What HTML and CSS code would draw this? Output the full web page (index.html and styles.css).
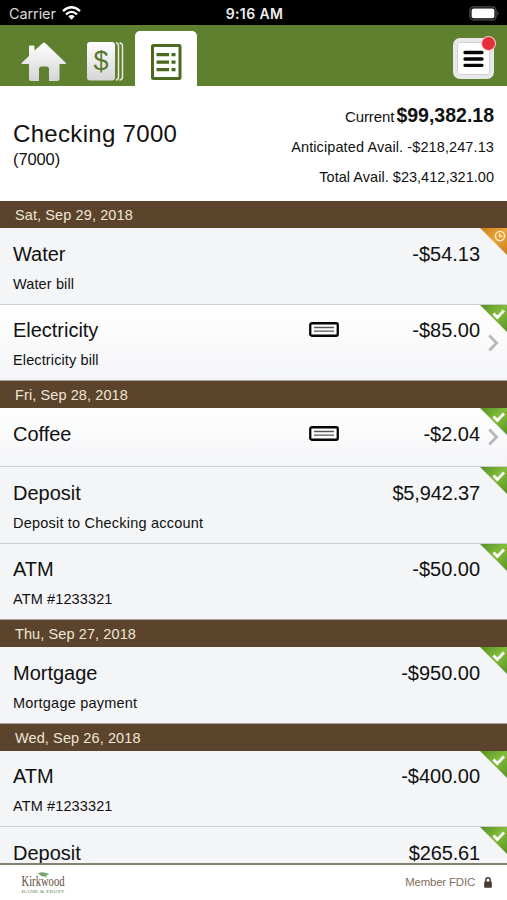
FILE: index.html
```html
<!DOCTYPE html>
<html lang="en">
<head>
<meta charset="utf-8">
<title>Checking 7000</title>
<link rel="stylesheet" href="styles.css">
</head>
<body>
<svg class="defs" aria-hidden="true">
  <defs>
    <linearGradient id="silver" x1="0" y1="0" x2="0" y2="1"><stop offset="0" stop-color="#fff"/><stop offset="1" stop-color="#d5d5d8"/></linearGradient>
    <linearGradient id="leaf" x1="0" y1="0" x2="1" y2="1"><stop offset="0" stop-color="#568e25"/><stop offset=".5" stop-color="#83bd3b"/><stop offset="1" stop-color="#599225"/></linearGradient>
    <linearGradient id="amber" x1="0" y1="0" x2="1" y2="1"><stop offset="0" stop-color="#c77f1c"/><stop offset=".5" stop-color="#eba53b"/><stop offset="1" stop-color="#c77d1b"/></linearGradient>
  </defs>
  <symbol id="cleared" viewBox="0 0 27 27"><path d="M0 0H27V27Z" fill="url(#leaf)"/><path d="M13.500 8.500l3.900 4L24 5.500" fill="none" stroke="#fff" stroke-width="2.800"/></symbol>
  <symbol id="pending" viewBox="0 0 27 27"><path d="M0 0H27V27Z" fill="url(#amber)"/><circle cx="20" cy="8" r="4.600" fill="none" stroke="#fff0d5" stroke-width="1.400"/><path d="M19.600 5.300V8.400H22.500" fill="none" stroke="#fff0d5" stroke-width="1.200"/></symbol>
  <symbol id="check" viewBox="0 0 30 15"><rect x="1.250" y="1.250" width="27.500" height="12.500" rx="1.500" fill="#fff" stroke="#050505" stroke-width="2.300"/><path d="M5 5.500H25M5 9.200H25" stroke="#555" stroke-width="1.300"/></symbol>
  <symbol id="chevron" viewBox="0 0 11 18"><path d="M1.300 1.500L8.600 9L1.300 16.500" fill="none" stroke="#b8b8ba" stroke-width="2.800"/></symbol>
</svg>
<div class="screen">
  <div class="status">
    <div class="carrier"><span>Carrier</span>
      <svg width="19" height="14" viewBox="0 0 19 14"><g fill="none" stroke="#fff" stroke-width="2.300"><path d="M1 5.100Q9.500-2.500 18 5.100"/><path d="M4 8.300Q9.500 3.500 15 8.300"/></g><path d="M6.300 10.300Q9.500 7.800 12.700 10.300L9.500 13.700Z" fill="#fff"/></svg>
    </div>
    <div class="clock">9:16 AM</div>
    <svg class="battery" width="31" height="15" viewBox="0 0 31 15"><rect x="1" y=".9" width="26" height="13" rx="3.600" fill="none" stroke="#505050" stroke-width="1.300"/><rect x="2.600" y="2.500" width="22.800" height="9.800" rx="2" fill="#fff"/><path d="M28.500 5Q30.500 7.400 28.500 9.800Z" fill="#666"/></svg>
  </div>
  <div class="nav">
    <svg class="home" width="46" height="40" viewBox="0 0 46 40"><path d="M23 .5Q23.700.500 24.400 1.200L45 21V22H38.500V37Q38.500 39 36.500 39H28V27Q28 24.500 25.500 24.500H20.500Q18 24.500 18 27V39H10Q8 39 8 37V22H.5V21L8 14V4.500Q8 3.500 9 3.500H12.500Q13.500 3.500 13.500 4.500V8.600L21.600 1.200Q22.300.500 23 .5Z" fill="url(#silver)"/></svg>
    <svg class="money" width="37" height="39" viewBox="0 0 37 39"><path d="M29 .8Q31.500 1.500 31.500 4V35Q31.500 37.500 29 38.200M32.500.800Q35.500 1.500 35.500 4V35Q35.500 37.500 32.500 38.200" fill="none" stroke="#e6e8e2" stroke-width="1.500"/><rect width="28" height="38.500" rx="3" fill="url(#silver)"/><text class="dollar" x="14" y="28" text-anchor="middle">$</text></svg>
    <div class="tab">
      <svg width="31" height="36" viewBox="0 0 31 36"><rect x="1.500" y="1.500" width="27.500" height="33" rx="1" fill="#fff" stroke="#4c691f" stroke-width="3"/><path d="M5.500 10.700H18M5.500 18.200H18M5.500 25.700H18M20.500 10.700H24.500M20.500 18.200H24.500M20.500 25.700H24.500" stroke="#48691e" stroke-width="3.300"/></svg>
    </div>
    <button class="menu" aria-label="Menu"><svg width="21" height="18" viewBox="0 0 21 18"><path d="M2 2.500H19M2 9H19M2 15.300H19" stroke="#050505" stroke-width="3.300" stroke-linecap="round"/></svg><i class="badge"></i></button>
  </div>
  <div class="account">
    <div class="name"><h1>Checking 7000</h1><div class="number">(7000)</div></div>
    <div class="balances">
      <div class="balance current">Current <b>$99,382.18</b></div>
      <div class="balance">Anticipated Avail. -$218,247.13</div>
      <div class="balance total">Total Avail. $23,412,321.00</div>
    </div>
  </div>
  <div class="list">
    <div class="date">Sat, Sep 29, 2018</div>
    <div class="row"><div class="desc"><div class="payee">Water</div><div class="memo">Water bill</div></div><div class="amount">-$54.13</div><svg class="corner"><use href="#pending"/></svg></div>
    <div class="row link last"><div class="desc"><div class="payee">Electricity</div><div class="memo">Electricity bill</div></div><svg class="slip"><use href="#check"/></svg><div class="amount">-$85.00</div><svg class="corner"><use href="#cleared"/></svg><svg class="arrow"><use href="#chevron"/></svg></div>
    <div class="date">Fri, Sep 28, 2018</div>
    <div class="row link short"><div class="desc"><div class="payee">Coffee</div></div><svg class="slip"><use href="#check"/></svg><div class="amount">-$2.04</div><svg class="corner"><use href="#cleared"/></svg><svg class="arrow"><use href="#chevron"/></svg></div>
    <div class="row"><div class="desc"><div class="payee">Deposit</div><div class="memo wide">Deposit to Checking account</div></div><div class="amount long">$5,942.37</div><svg class="corner"><use href="#cleared"/></svg></div>
    <div class="row last"><div class="desc"><div class="payee">ATM</div><div class="memo">ATM #1233321</div></div><div class="amount">-$50.00</div><svg class="corner"><use href="#cleared"/></svg></div>
    <div class="date">Thu, Sep 27, 2018</div>
    <div class="row last"><div class="desc"><div class="payee">Mortgage</div><div class="memo wide">Mortgage payment</div></div><div class="amount">-$950.00</div><svg class="corner"><use href="#cleared"/></svg></div>
    <div class="date">Wed, Sep 26, 2018</div>
    <div class="row"><div class="desc"><div class="payee">ATM</div><div class="memo">ATM #1233321</div></div><div class="amount">-$400.00</div><svg class="corner"><use href="#cleared"/></svg></div>
    <div class="row"><div class="desc"><div class="payee">Deposit</div></div><div class="amount long">$265.61</div><svg class="corner"><use href="#cleared"/></svg></div>
  </div>
  <div class="footer">
    <svg class="logo" width="46" height="27" viewBox="0 0 46 27"><path d="M17 2.500Q21 0 28 3Q24 7 20 4.500Q18.500 3.500 17 2.500Z" fill="#79a66a"/><path d="M20 4.500Q24 3.500 26 6.500" fill="none" stroke="#668e52" stroke-width=".8"/><text class="brand" x=".5" y="15" textLength="43" lengthAdjust="spacingAndGlyphs">Kirkwood</text><text class="tagline" x=".5" y="21.500" textLength="43" lengthAdjust="spacingAndGlyphs">BANK &amp; TRUST</text></svg>
    <div class="fdic"><span>Member FDIC</span><svg width="8" height="11" viewBox="0 0 8 11"><path d="M1.800 5V3Q1.800.800 4 .8T6.200 3V5" fill="none" stroke="#4c3c2d" stroke-width="1.500"/><rect x=".2" y="4.500" width="7.600" height="6.300" rx=".6" fill="#4c3c2d"/></svg></div>
  </div>
</div>
</body>
</html>
```
FILE: styles.css
```css
* { box-sizing: border-box; }
body { margin: 0; background: #fff; color: #111; font-family: "Liberation Sans", Arial, sans-serif; }
.defs { position: absolute; width: 0; height: 0; }
.screen { width: 507px; height: 900px; display: flex; flex-direction: column; overflow: hidden; }

.status { height: 25px; flex: none; background: #000; color: #fff; display: grid; grid-template-columns: 1fr auto 1fr; align-items: center; padding: 2px 7px 0 9px; }
.carrier { display: flex; align-items: center; gap: 6px; font: 14.500px/20px Inter, sans-serif; letter-spacing: -.1px; color: #d8d8d8; }
.carrier svg { margin-top: -2px; }
.clock { font: 600 14px/20px Inter, sans-serif; letter-spacing: .4px; color: #eee; }
.battery { justify-self: end; }

.nav { height: 61px; flex: none; background: #5f812f; display: flex; padding: 0 13px 0 21px; }
.home { margin-top: 17px; }
.money { margin: 17px 0 0 20px; }
.dollar { font: 27px "Liberation Sans", sans-serif; fill: #55792a; }
.tab { width: 62px; height: 55px; margin: 6px 0 0 11px; padding: 12.500px 0 0 16px; border-radius: 5px 5px 0 0; background: #fff; }
.menu { position: relative; width: 41px; height: 41px; margin: 13px 0 0 auto; border: 4px solid #e8e8ea; border-radius: 7px; background: #fff; padding: 0; display: grid; place-items: center; box-shadow: inset 0 0 0 1px #d3d3d5; }
.badge { position: absolute; top: -5px; right: -5px; width: 13px; height: 13px; border-radius: 50%; background: #e5303a; box-shadow: 0 0 0 1px #f4c9c9; }

.account { height: 115px; flex: none; display: flex; justify-content: space-between; padding: 0 13px; }
.name { padding-top: 33px; }
h1 { margin: 0; font-size: 24px; line-height: 30px; font-weight: 400; letter-spacing: .32px; }
.number { font-size: 16.500px; line-height: 20px; letter-spacing: -.1px; }
.balances { padding-top: 15px; text-align: right; font-size: 14.500px; letter-spacing: .1px; }
.balance { line-height: 30px; height: 31px; white-space: pre; }
.total { height: 29px; line-height: 29px; letter-spacing: .03px; }
.current { font-size: 15px; line-height: 28px; letter-spacing: -.1px; word-spacing: -2px; }
.current b { font-size: 19.500px; letter-spacing: 0; }

.list { flex: 1; min-height: 0; overflow: hidden; }
.date { height: 27px; padding-left: 15px; background: #5b442b; color: #eee4d8; font-size: 14.500px; line-height: 29px; letter-spacing: .1px; }
.row { position: relative; height: 76.500px; display: flex; padding: 10.500px 27px 0 13px; background: #f4f5f7; border-bottom: 1px solid #ccced0; }
.row.link { background: linear-gradient(#fff, #f4f5f7); }
.row.short { height: 59px; }
.row.last { border-color: #a9a39c; }
.desc { flex: 1; }
.payee, .amount { font-size: 20px; line-height: 30px; letter-spacing: -.02px; }
.amount { width: 141px; text-align: right; }
.amount.long { letter-spacing: -.15px; }
.memo { font-size: 14.500px; line-height: 30px; letter-spacing: .12px; }
.memo.wide { letter-spacing: .21px; }
.slip { width: 30px; height: 15px; margin-top: 7px; }
.corner { position: absolute; top: 0; right: 0; width: 27px; height: 27px; }
.arrow { position: absolute; top: 29px; right: 8px; width: 11px; height: 18px; }
.short .arrow { top: 20px; }

.footer { height: 37px; flex: none; border-top: 2px solid #84836f; background: #fff; display: flex; justify-content: space-between; padding: 6px 15px 0 21px; }
.brand { font: 14px "Liberation Serif", serif; fill: #614c3a; }
.tagline { font: 5px "Liberation Serif", serif; fill: #66915b; }
.fdic { display: flex; align-items: center; gap: 9px; height: 22px; font-size: 11.400px; letter-spacing: -.15px; color: #816e5e; }
```
